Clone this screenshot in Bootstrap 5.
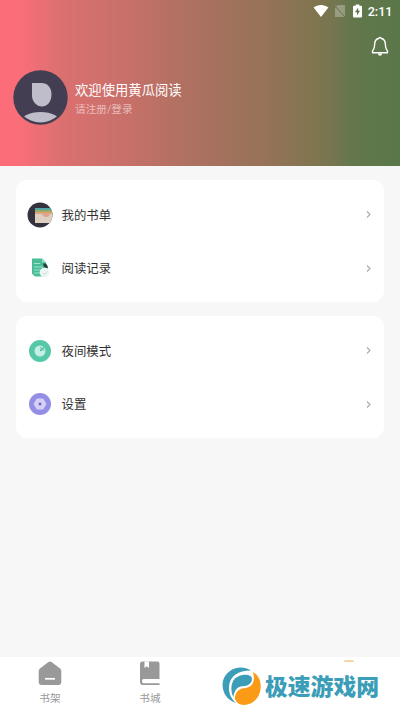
<!DOCTYPE html>
<html lang="zh-CN">
<head>
<meta charset="utf-8">
<meta name="viewport" content="width=device-width, initial-scale=1">
<title>黄瓜阅读</title>
<link href="https://cdn.jsdelivr.net/npm/bootstrap@5.3.0/dist/css/bootstrap.min.css" rel="stylesheet">
<style>
body{font-family:Roboto,"Noto Sans CJK SC",sans-serif;background:#f7f7f7;height:712px;overflow:hidden}
svg{display:block;flex:none}
.hero{height:165.5px;background:linear-gradient(90deg,#fc6c79 0,#f96e79 20px,#db7070 62px,#c87069 125px,#ae7161 190px,#977259 262px,#80754f 315px,#717650 338px,#63774b 352px,#5a774a 400px)}
.status{height:22px;padding:0 7.5px 0 0}
.sim{margin-left:5px}
.battery{margin-left:7px}
.clock{font-size:12.6px;line-height:22px;font-weight:500;margin:1px 0 0 5.5px}
.bell-row{height:48px;padding:14px 11px 0 0}
.profile{padding-left:13px}
.names{margin:4px 0 0 7px}
.hello{font-size:13.33px;line-height:20px}
.login{font-size:10.67px;line-height:17px;color:rgba(255,255,255,.55)}
.panels{padding:14.5px 16px 0;gap:14px}
.panel{border-radius:11px;padding:8px 0;height:122px}
.entry{height:53.5px;padding:0 12px 0 11px;font-size:12.4px;color:#303030}
.entry span{margin:3px 0 0 8.5px}
.tabs{height:55px}
.tab{width:100px;font-size:10.67px;line-height:14px;color:#999;padding-top:3px}
.tab span{margin-top:6px}
.brand{left:221px;top:667px;gap:4px;color:#3b9db7;font:900 22.8px/34px "Noto Sans CJK SC",sans-serif;white-space:nowrap}
.brand span{margin-top:-3px}
.dot{left:344px;top:660px;width:10px;height:2px;background:#f6d49b;border-radius:50% 50% 0 0}
</style>
</head>
<body class="d-flex flex-column position-relative">
<header class="hero text-white">
  <div class="status d-flex justify-content-end align-items-center">
    <svg width="16" height="14" viewBox="0 0 16 14"><path d="M.6 3.6C4.8.1 11.2.1 15.4 3.6L8 13Z" fill="#fff"/></svg>
    <svg class="sim" width="12" height="14" viewBox="0 0 12 14"><path d="M4 1h7v12H1V4Z" fill="#fff" opacity=".28"/><path d="M1.500 2 11 12.500" stroke="#6b734e" stroke-width="1.300"/><path d="M1.500 1.200 11 11.700" stroke="#ddd" opacity=".5" stroke-width=".8"/></svg>
    <svg class="battery" width="9" height="14" viewBox="0 0 9 14"><path d="M2.700 1.700V.5h3.600v1.200H8q1 0 1 1v9.800q0 1-1 1H1q-1 0-1-1V2.700q0-1 1-1Z" fill="#fff"/><path d="M5.200 3.600 2 8.300h2v3.100l3-4.700H5.200Z" fill="#60744b"/></svg>
    <span class="clock">2:11</span>
  </div>
  <div class="bell-row d-flex justify-content-end">
    <svg width="18" height="21" viewBox="0 0 18 21" fill="none" stroke="#fff" stroke-width="1.400" stroke-linecap="round" stroke-linejoin="round"><path d="M8 2.200q1-1.500 2 0c3 .7 4.300 2.800 4.300 5.800 0 4 .7 5.400 2.200 7.200v1.600h-15v-1.600C3 13.400 3.700 12 3.700 8c0-3 1.300-5.100 4.300-5.800Z"/><path d="M6.800 17.500h4.400q-.5 2.300-2.200 2.300t-2.200-2.300Z" fill="#fff" stroke="none"/></svg>
  </div>
  <div class="profile d-flex align-items-center">
    <svg width="55" height="55" viewBox="0 0 55 55"><defs><clipPath id="face"><circle cx="27.500" cy="27.500" r="25"/></clipPath></defs><circle cx="27.500" cy="27.500" r="27.200" fill="#433e51"/><path d="M19 13h9.500c6 0 10 4.500 10 11.500s-4 12-9.500 12-10-5-10-11Z" fill="#bfbdc9"/><ellipse cx="27.500" cy="52" rx="20" ry="10" fill="#bfbdc9" clip-path="url(#face)"/></svg>
    <div class="names">
      <div class="hello">欢迎使用黄瓜阅读</div>
      <div class="login">请注册/登录</div>
    </div>
  </div>
</header>
<main class="panels flex-grow-1 d-flex flex-column">
  <section class="panel bg-white">
    <a class="entry d-flex align-items-center text-decoration-none" href="#">
      <svg width="26" height="26" viewBox="0 0 26 26"><defs><clipPath id="disc"><circle cx="13" cy="13" r="12.500"/></clipPath></defs><circle cx="13" cy="13" r="12.500" fill="#34323f"/><g clip-path="url(#disc)"><path d="M8 6h18v3H8z" fill="#53a8a5"/><path d="M8 8h18v2H8z" fill="#8fad64"/><path d="M8 9.800h18v2H8z" fill="#e5a16c"/><path d="M8 11.500h18V21H8z" fill="#dfcfc1"/><path d="M15 11.500h8q-1 3.500-4 3.500t-4-3.500" fill="#dda38d"/></g></svg>
      <span>我的书单</span>
      <svg class="ms-auto" width="7" height="9" viewBox="0 0 7 9"><path d="m2 1.500 3 3-3 3" fill="none" stroke="#aaa" stroke-width="1.100"/></svg>
    </a>
    <a class="entry d-flex align-items-center text-decoration-none" href="#">
      <svg width="26" height="26" viewBox="0 0 26 26"><path d="M5 3.500h10l4 4v14H8l-3-3Z" fill="#48bd98"/><path d="M7 8.500h6M7 12h9M7 15h7M7 18h6" stroke="#a5e2cd" stroke-width="1.200"/><path d="M15 3.500v4h4Z" fill="#8adbc0"/><path d="M16 8.500h3q1.500 1.500 2 5l-4-1.500Z" fill="#243e38"/><circle cx="17.500" cy="17.500" r="4.800" fill="#edf5f2"/><path d="m16 18 1.500 1.500 2.500-3" fill="none" stroke="#c0ded4"/></svg>
      <span>阅读记录</span>
      <svg class="ms-auto" width="7" height="9" viewBox="0 0 7 9"><path d="m2 1.500 3 3-3 3" fill="none" stroke="#aaa" stroke-width="1.100"/></svg>
    </a>
  </section>
  <section class="panel bg-white">
    <a class="entry d-flex align-items-center text-decoration-none" href="#">
      <svg width="26" height="26" viewBox="0 0 26 26"><circle cx="13" cy="13" r="11" fill="#56c8a9"/><circle cx="13" cy="13" r="5.500" fill="#c5efe4"/><path d="M13 13V8.500L16.500 9.500 18 12.500Z" fill="#8bdac5"/><path d="m13 13 4-3.500" stroke="#3da98c"/></svg>
      <span>夜间模式</span>
      <svg class="ms-auto" width="7" height="9" viewBox="0 0 7 9"><path d="m2 1.500 3 3-3 3" fill="none" stroke="#aaa" stroke-width="1.100"/></svg>
    </a>
    <a class="entry d-flex align-items-center text-decoration-none" href="#">
      <svg width="26" height="26" viewBox="0 0 26 26"><circle cx="13" cy="13" r="11" fill="#958ee5"/><path d="M10 8h6l3 5-3 5h-6l-3-5Z" fill="#d4d0f8" stroke="#d4d0f8" stroke-linejoin="round"/><circle cx="13" cy="13" r="1.500" fill="#6f68b3"/></svg>
      <span>设置</span>
      <svg class="ms-auto" width="7" height="9" viewBox="0 0 7 9"><path d="m2 1.500 3 3-3 3" fill="none" stroke="#aaa" stroke-width="1.100"/></svg>
    </a>
  </section>
</main>
<nav class="tabs bg-white d-flex">
  <div class="tab d-flex flex-column align-items-center">
    <svg width="24" height="26" viewBox="0 0 24 26"><path d="M10.500 2q1.500-1 3 0l8.500 6.500q1.300 1 1.300 2.500v11q0 3-3 3H3.700q-3 0-3-3V11q0-1.500 1.300-2.500Z" fill="#999"/><path d="M7 18.800h10" stroke="#fff" stroke-width="1.700"/></svg>
    <span>书架</span>
  </div>
  <div class="tab d-flex flex-column align-items-center">
    <svg width="20" height="26" viewBox="0 0 20 26"><path d="M2.500 1.500h15q2 0 2 2v15.500h-16q-1.500 0-1.500 2 0 2.200 1.500 2.200h16V25H3Q0 25 0 22V4q0-2.500 2.500-2.500Z" fill="#999"/><path d="M4.500 1.500h4.500v6.500L6.800 6.300 4.500 8Z" fill="#fff"/></svg>
    <span>书城</span>
  </div>
</nav>
<div class="dot position-absolute"></div>
<div class="brand position-absolute d-flex align-items-center">
  <svg width="40" height="40" viewBox="0 0 40 40"><path d="M30 3.500C24-.5 16-.7 10 3.200 3 7.500.5 15 2 22c1.500 7 6 11.500 13 14C9.500 31 7.500 25 8 19.500 9 9 17 3.500 30 3.500Z" fill="#3b9db7"/><path d="M31.500 4.700c5.200 2.800 8.200 8.300 8.200 14.500C39.700 30 32 38 23 38c-4.500 0-8-2.500-9.200-6.700C14.500 25 18 21.800 22.500 21.300c6-.5 9.500-3 10.200-8.300.5-3.500 0-6-1.200-8.300Z" fill="#fb9b15"/><path d="M12.300 30C9.500 24 9.500 16 14 11.500 18 7.500 27 6.500 30 9.500c2.200 2.500.5 7-3.500 8.800-3.500 1.500-7.500.4-10.500 3.200-2 2-3 4.500-3.700 8.500Z" fill="#3b9db7"/></svg>
  <span>极速游戏网</span>
</div>
<script src="https://cdn.jsdelivr.net/npm/bootstrap@5.3.0/dist/js/bootstrap.bundle.min.js"></script>
</body>
</html>
